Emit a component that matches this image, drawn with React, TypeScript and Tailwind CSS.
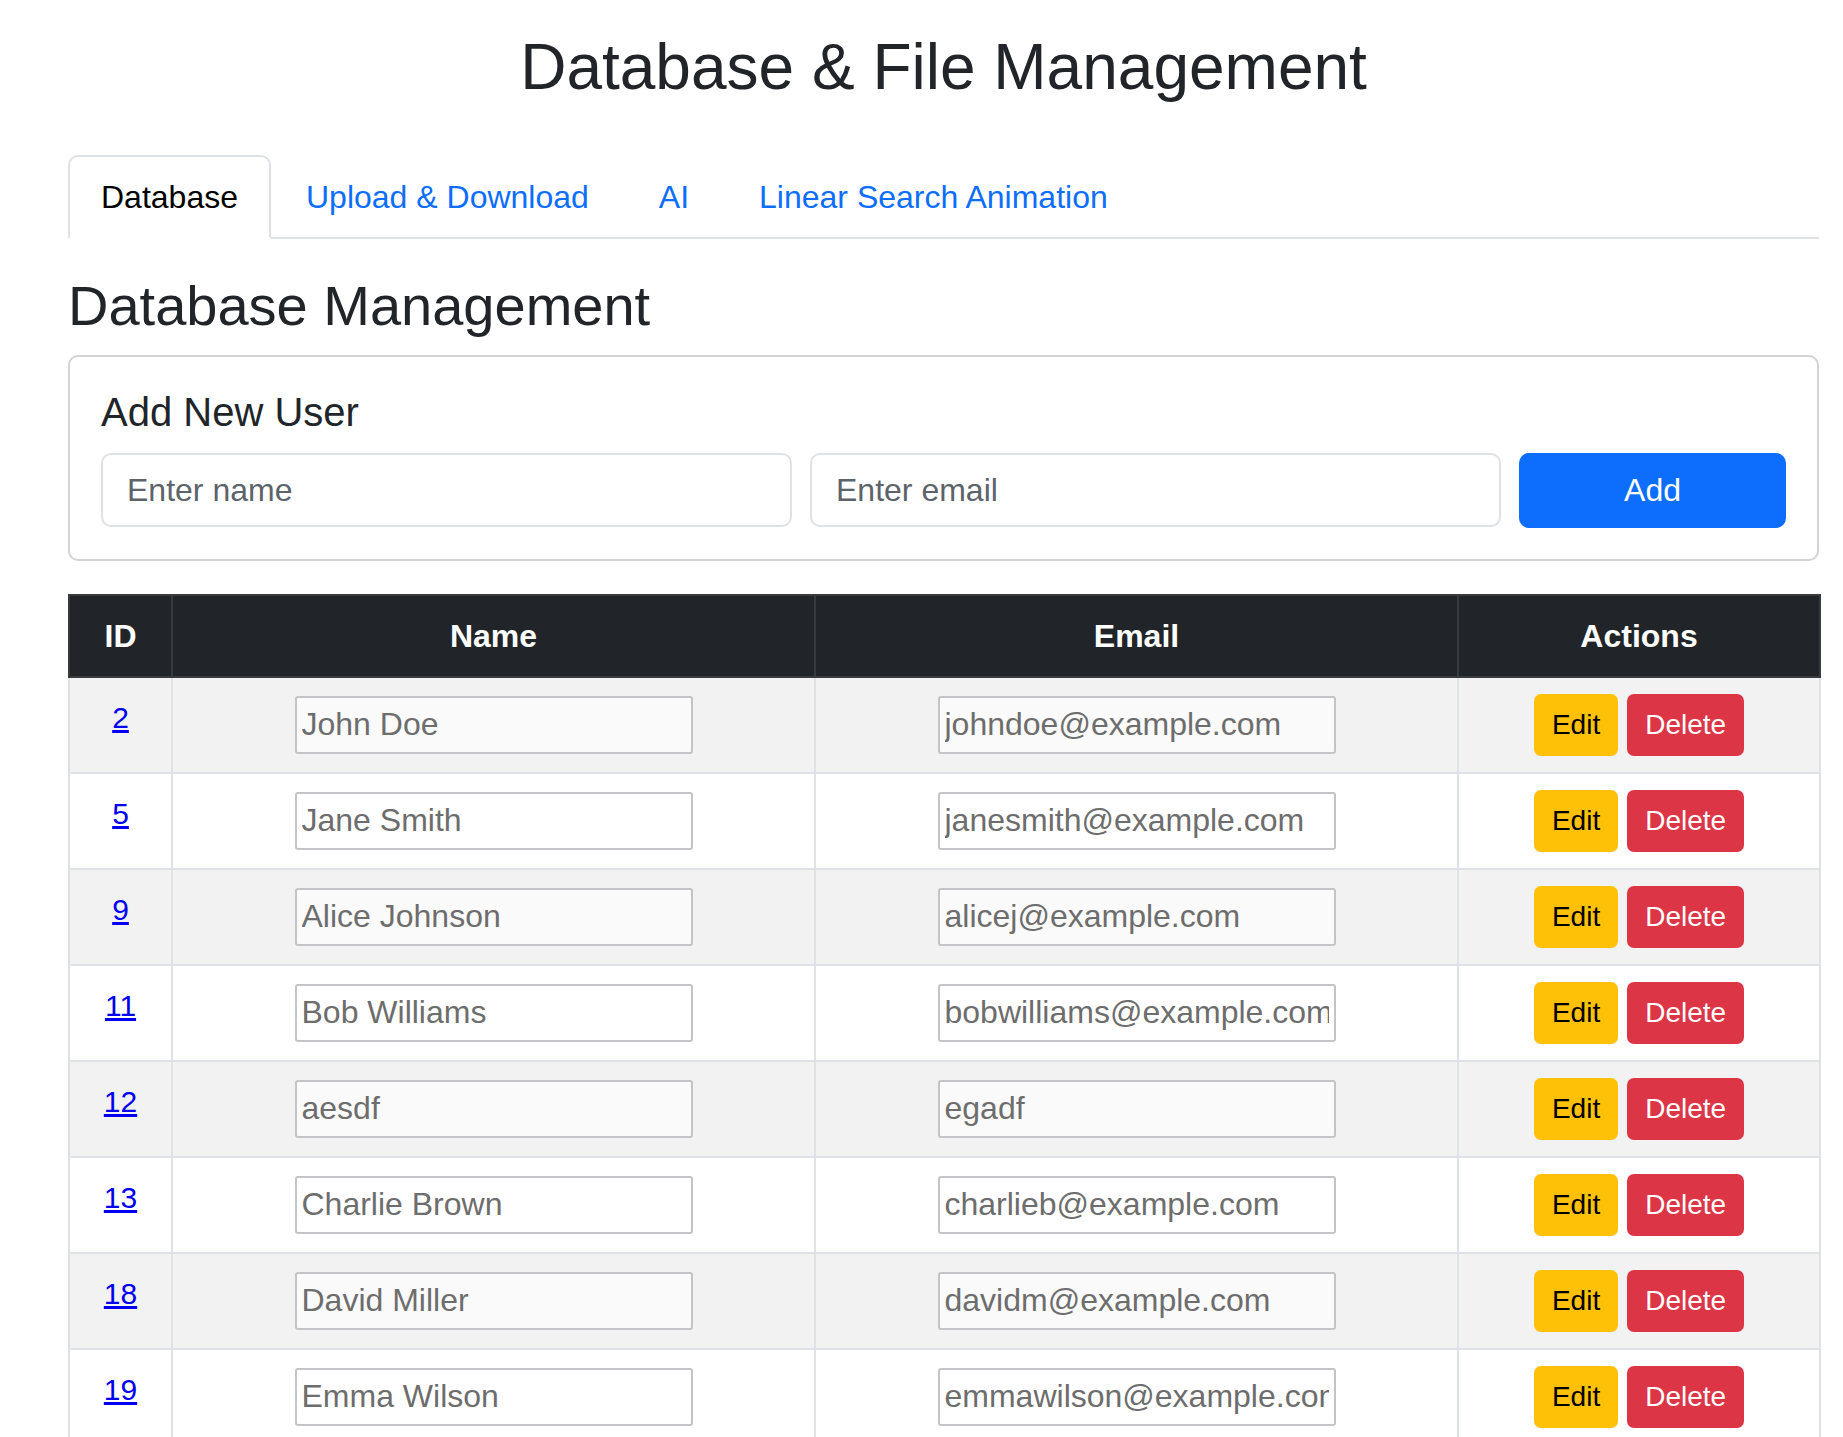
import { useState } from "react";

interface Usuario {
  id: number;
  nome: string;
  email: string;
}

const usuarios: Usuario[] = [
  { id: 2, nome: "John Doe", email: "johndoe@example.com" },
  { id: 5, nome: "Jane Smith", email: "janesmith@example.com" },
  { id: 9, nome: "Alice Johnson", email: "alicej@example.com" },
  { id: 11, nome: "Bob Williams", email: "bobwilliams@example.com" },
  { id: 12, nome: "aesdf", email: "egadf" },
  { id: 13, nome: "Charlie Brown", email: "charlieb@example.com" },
  { id: 18, nome: "David Miller", email: "davidm@example.com" },
  { id: 19, nome: "Emma Wilson", email: "emmawilson@example.com" },
];

const abas = ["Database", "Upload & Download", "AI", "Linear Search Animation"];

function CampoTabela({ valor }: { valor: string }) {
  return (
    <input
      readOnly
      value={valor}
      className="mx-auto block h-[58px] w-[398px] rounded-[3px] border-2 border-[#c4c4c8] bg-white/60 px-[5px] text-[32px] text-[#6d6d6d] outline-none"
    />
  );
}

export default function App() {
  const [abaAtiva, setAbaAtiva] = useState("Database");

  return (
    <div className="h-[1437px] overflow-hidden bg-white pl-[68px] font-['Liberation_Sans',Arial,sans-serif] text-[#212529]">
      <div className="w-[1751px]">
        <h1 className="pt-[29px] text-center text-[64px] leading-[1.2]">
          Database &amp; File Management
        </h1>

        {/* Abas */}
        <nav className="mt-[49px] flex border-b-2 border-[#dee2e6]">
          {abas.map((aba) => (
            <button
              key={aba}
              onClick={() => setAbaAtiva(aba)}
              className={
                aba === abaAtiva
                  ? "-mb-[2px] rounded-t-[10px] border-2 border-[#dee2e6] border-b-white bg-white px-[31px] py-4 text-[32px] leading-[48px] text-black"
                  : "-mb-[2px] rounded-t-[10px] border-2 border-transparent px-[33px] py-4 text-[32px] leading-[48px] text-[#0d6efd]"
              }
            >
              {aba}
            </button>
          ))}
        </nav>

        <h2 className="mt-[33px] text-[56px] leading-[1.2]">Database Management</h2>

        {/* Novo usuário */}
        <div className="mt-4 rounded-[10px] border-2 border-[#d3d3d3] p-[31px]">
          <h4 className="text-[40px] leading-[1.2]">Add New User</h4>
          <div className="mt-[17px] grid grid-cols-[1fr_1fr_267px] items-center gap-x-[18px]">
            <input
              placeholder="Enter name"
              className="h-[74px] rounded-[10px] border-2 border-[#dee2e6] px-6 text-[32px] outline-none placeholder:text-[#5c636a]"
            />
            <input
              placeholder="Enter email"
              className="h-[74px] rounded-[10px] border-2 border-[#dee2e6] px-6 text-[32px] outline-none placeholder:text-[#5c636a]"
            />
            <button className="h-[75px] rounded-[10px] bg-[#0d6efd] text-[32px] text-white">
              Add
            </button>
          </div>
        </div>

        {/* Tabela */}
        <table className="mt-[33px] w-[1751px] table-fixed border-collapse">
          <colgroup>
            <col className="w-[103px]" />
            <col className="w-[643px]" />
            <col className="w-[643px]" />
            <col className="w-[362px]" />
          </colgroup>
          <thead className="bg-[#212529] text-white">
            <tr>
              {["ID", "Name", "Email", "Actions"].map((titulo) => (
                <th
                  key={titulo}
                  className="border-2 border-[#373b3e] py-4 text-center text-[32px] font-bold leading-[48px]"
                >
                  {titulo}
                </th>
              ))}
            </tr>
          </thead>
          <tbody>
            {usuarios.map((u, index) => (
              <tr key={u.id} className={index % 2 === 0 ? "bg-[#f2f2f2]" : "bg-white"}>
                <td className="border-2 border-[#dee2e6] pt-4 text-center align-top text-[30px] leading-[48px]">
                  <a href="#" className="text-[#0000ee] underline">
                    {u.id}
                  </a>
                </td>
                <td className="border-2 border-[#dee2e6] py-4 align-middle">
                  <CampoTabela valor={u.nome} />
                </td>
                <td className="border-2 border-[#dee2e6] py-4 align-middle">
                  <CampoTabela valor={u.email} />
                </td>
                <td className="border-2 border-[#dee2e6] py-4 align-middle">
                  <div className="flex justify-center gap-[9px]">
                    <button className="h-[62px] rounded-[7px] bg-[#ffc107] px-[18px] text-[28px] text-black">
                      Edit
                    </button>
                    <button className="h-[62px] rounded-[7px] bg-[#dc3545] px-[18px] text-[28px] text-white">
                      Delete
                    </button>
                  </div>
                </td>
              </tr>
            ))}
          </tbody>
        </table>
      </div>
    </div>
  );
}
